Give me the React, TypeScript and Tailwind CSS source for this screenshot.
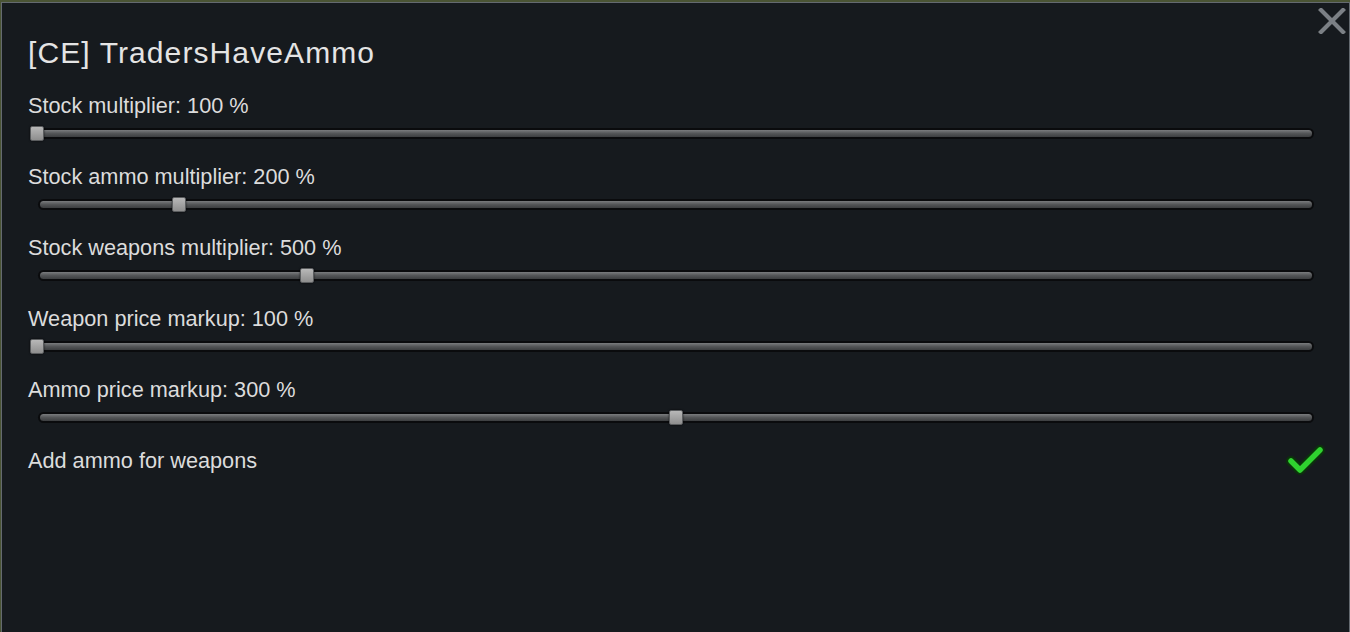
import React from "react";

interface SliderRow {
  label: string;
  handle: number; // px offset of handle from slider start
}

const ROWS: SliderRow[] = [
  { label: "Stock multiplier: 100 %", handle: 0 },
  { label: "Stock ammo multiplier: 200 %", handle: 142 },
  { label: "Stock weapons multiplier: 500 %", handle: 270 },
  { label: "Weapon price markup: 100 %", handle: 0 },
  { label: "Ammo price markup: 300 %", handle: 639 },
];

function Slider({ handle }: { handle: number }) {
  return (
    <div className="relative ml-[2px] mt-[7px] h-[16px] w-[1285px]">
      {/* track */}
      <div className="absolute left-[8px] top-[2px] h-[11px] w-[1276px] rounded-full bg-[#0a0b0d] p-[2px]">
        <div className="h-full w-full rounded-full bg-gradient-to-b from-[#7a7c7e] via-[#535557] to-[#3c3e40]" />
      </div>
      {/* handle */}
      <div
        className="absolute top-[0px] h-[15px] w-[14px] rounded-[2px] border border-[#5a5c5e] bg-gradient-to-b from-[#b8b8b8] to-[#8e8e8e] shadow-[0_0_2px_rgba(0,0,0,0.8)]"
        style={{ left: handle }}
      />
    </div>
  );
}

function CloseIcon() {
  return (
    <svg width="28" height="26" viewBox="0 0 28 26">
      <path d="M3 2 L25 24 M25 2 L3 24" stroke="#7b8085" strokeWidth="4.2" strokeLinecap="square" />
    </svg>
  );
}

function Check() {
  return (
    <svg width="40" height="36" viewBox="0 0 40 36">
      <path
        d="M5 19 L14 28 L34 8"
        fill="none"
        stroke="#0b330b"
        strokeWidth="10"
        strokeLinecap="round"
        strokeLinejoin="round"
      />
      <path
        d="M5 19 L14 28 L34 8"
        fill="none"
        stroke="#2fd22f"
        strokeWidth="5.5"
        strokeLinecap="round"
        strokeLinejoin="round"
      />
    </svg>
  );
}

export default function App() {
  return (
    <div
      className="h-[632px] w-[1350px] overflow-hidden bg-[#4a5434]"
      style={{ fontFamily: '"Liberation Sans", Arial, sans-serif' }}
    >
      <div className="relative ml-[1px] mt-[2px] h-[700px] w-[1349px] border-l border-r border-t border-[#646a70] bg-[#161a1e] pl-[26px] pt-[30px]">
        <div className="absolute right-[3px] top-[5px]">
          <CloseIcon />
        </div>

        <div className="mb-[20px] h-[40px] text-[30px] leading-[40px] tracking-[1.1px] text-[#e4e4e4]">
          [CE] TradersHaveAmmo
        </div>

        {ROWS.map((r) => (
          <div key={r.label} className="flex h-[71px] flex-col">
            <div className="h-[26px] text-[21.7px] leading-[26px] text-[#dcdcdc]">{r.label}</div>
            <Slider handle={r.handle} />
          </div>
        ))}

        <div className="flex h-[40px] items-start justify-between pr-[23px]">
          <div className="h-[26px] text-[21.7px] leading-[26px] text-[#dcdcdc]">Add ammo for weapons</div>
          <div className="-mt-[6px]">
            <Check />
          </div>
        </div>
      </div>
    </div>
  );
}
